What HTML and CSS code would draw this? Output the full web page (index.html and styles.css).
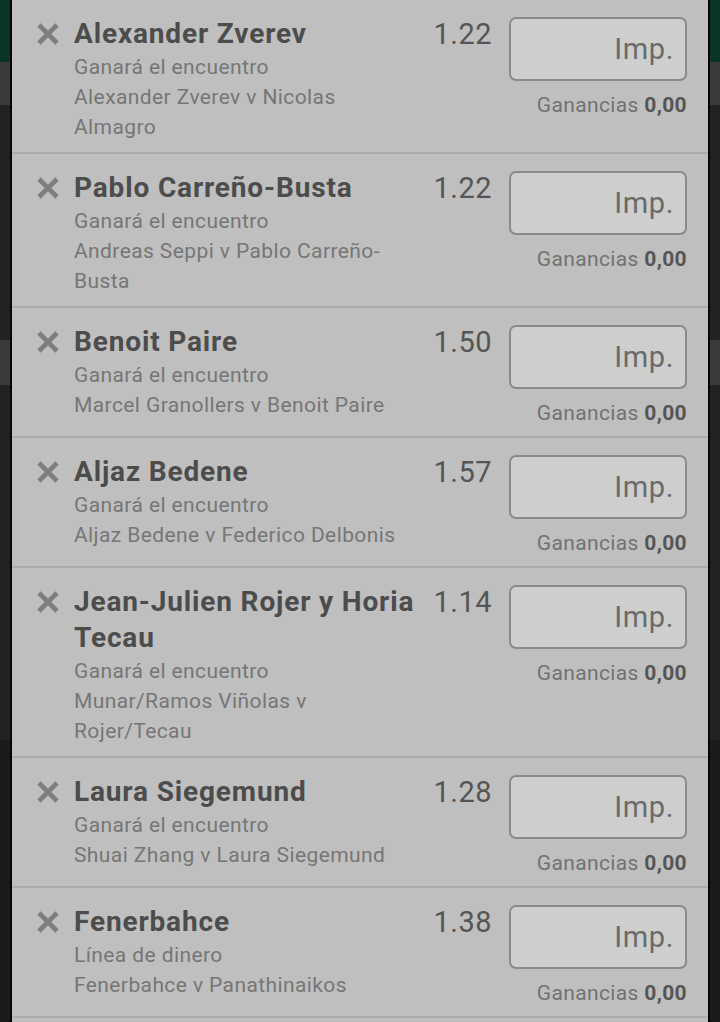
FILE: index.html
```html
<!DOCTYPE html>
<html lang="es">
<head>
<meta charset="utf-8">
<title>Boleto</title>
<link rel="stylesheet" href="styles.css">
</head>
<body>
<div class="sheet">
  <div class="bet">
    <span class="remove"><svg viewBox="0 0 22 22" width="22" height="22"><path d="M2 2 L20 20 M20 2 L2 20"/></svg></span>
    <div class="info">
      <div class="title">Alexander Zverev</div>
      <div class="sub">Ganará el encuentro</div>
      <div class="sub">Alexander Zverev v Nicolas Almagro</div>
    </div>
    <div class="odds">1.22</div>
    <div class="stake"><div class="box">Imp.</div><div class="win">Ganancias <b>0,00</b></div></div>
  </div>
  <div class="bet">
    <span class="remove"><svg viewBox="0 0 22 22" width="22" height="22"><path d="M2 2 L20 20 M20 2 L2 20"/></svg></span>
    <div class="info">
      <div class="title">Pablo Carreño-Busta</div>
      <div class="sub">Ganará el encuentro</div>
      <div class="sub">Andreas Seppi v Pablo Carreño-Busta</div>
    </div>
    <div class="odds">1.22</div>
    <div class="stake"><div class="box">Imp.</div><div class="win">Ganancias <b>0,00</b></div></div>
  </div>
  <div class="bet">
    <span class="remove"><svg viewBox="0 0 22 22" width="22" height="22"><path d="M2 2 L20 20 M20 2 L2 20"/></svg></span>
    <div class="info">
      <div class="title">Benoit Paire</div>
      <div class="sub">Ganará el encuentro</div>
      <div class="sub">Marcel Granollers v Benoit Paire</div>
    </div>
    <div class="odds">1.50</div>
    <div class="stake"><div class="box">Imp.</div><div class="win">Ganancias <b>0,00</b></div></div>
  </div>
  <div class="bet">
    <span class="remove"><svg viewBox="0 0 22 22" width="22" height="22"><path d="M2 2 L20 20 M20 2 L2 20"/></svg></span>
    <div class="info">
      <div class="title">Aljaz Bedene</div>
      <div class="sub">Ganará el encuentro</div>
      <div class="sub">Aljaz Bedene v Federico Delbonis</div>
    </div>
    <div class="odds">1.57</div>
    <div class="stake"><div class="box">Imp.</div><div class="win">Ganancias <b>0,00</b></div></div>
  </div>
  <div class="bet">
    <span class="remove"><svg viewBox="0 0 22 22" width="22" height="22"><path d="M2 2 L20 20 M20 2 L2 20"/></svg></span>
    <div class="info">
      <div class="title">Jean-Julien Rojer y Horia Tecau</div>
      <div class="sub">Ganará el encuentro</div>
      <div class="sub">Munar/Ramos Viñolas v Rojer/Tecau</div>
    </div>
    <div class="odds">1.14</div>
    <div class="stake"><div class="box">Imp.</div><div class="win">Ganancias <b>0,00</b></div></div>
  </div>
  <div class="bet">
    <span class="remove"><svg viewBox="0 0 22 22" width="22" height="22"><path d="M2 2 L20 20 M20 2 L2 20"/></svg></span>
    <div class="info">
      <div class="title">Laura Siegemund</div>
      <div class="sub">Ganará el encuentro</div>
      <div class="sub">Shuai Zhang v Laura Siegemund</div>
    </div>
    <div class="odds">1.28</div>
    <div class="stake"><div class="box">Imp.</div><div class="win">Ganancias <b>0,00</b></div></div>
  </div>
  <div class="bet">
    <span class="remove"><svg viewBox="0 0 22 22" width="22" height="22"><path d="M2 2 L20 20 M20 2 L2 20"/></svg></span>
    <div class="info">
      <div class="title">Fenerbahce</div>
      <div class="sub">Línea de dinero</div>
      <div class="sub">Fenerbahce v Panathinaikos</div>
    </div>
    <div class="odds">1.38</div>
    <div class="stake"><div class="box">Imp.</div><div class="win">Ganancias <b>0,00</b></div></div>
  </div>
</div>
</body>
</html>
```
FILE: styles.css
```css
html {
  background: linear-gradient(to bottom,
    #0b3326 0, #0b3326 62px,
    #3a3a3a 62px, #3a3a3a 105px,
    #222222 105px, #222222 340px,
    #3a3a3a 340px, #3a3a3a 385px,
    #222222 385px, #222222 740px,
    #1a1a1a 740px, #1a1a1a 100%);
  min-height: 100%;
}
body {
  margin: 0;
  height: 1022px;
  overflow: hidden;
  font-family: Roboto, "Liberation Sans", sans-serif;
}
.sheet {
  margin: 0 10px;
  border-left: 2px solid #050505;
  border-right: 2px solid #050505;
  background: #bfbfbf;
  height: 1022px;
  overflow: hidden;
}
.bet {
  display: grid;
  grid-template-columns: 38px 344px 1fr 178px;
  align-items: start;
  padding: 16px 21px 10px 24px;
  border-bottom: 2px solid #ababab;
}
.remove {
  display: block;
  width: 22px;
  height: 22px;
  margin-top: 7px;
  margin-left: 1px;
}
.remove svg {
  display: block;
  stroke: #7e7e7e;
  stroke-width: 4.6;
  fill: none;
}
.title {
  font-size: 28px;
  line-height: 36px;
  letter-spacing: 0.85px;
  font-weight: 700;
  color: #4c4c4c;
}
.sub {
  font-size: 21px;
  line-height: 30px;
  letter-spacing: 0.4px;
  color: #767676;
}
.odds {
  font-size: 29px;
  line-height: 36px;
  letter-spacing: 0.5px;
  color: #555555;
  text-align: right;
  padding-right: 17px;
}
.stake {
  margin-top: 1px;
}
.box {
  box-sizing: border-box;
  height: 64px;
  border: 2px solid #8a8a8a;
  border-radius: 7px;
  background: #cecece;
  color: #6a6a6a;
  font-size: 29px;
  letter-spacing: 0.6px;
  display: flex;
  align-items: center;
  justify-content: flex-end;
  padding-right: 11px;
}
.win {
  margin-top: 11px;
  font-size: 21px;
  line-height: 26px;
  letter-spacing: 0.35px;
  color: #727272;
  text-align: right;
}
.win b {
  color: #555555;
  font-weight: 700;
}
```
